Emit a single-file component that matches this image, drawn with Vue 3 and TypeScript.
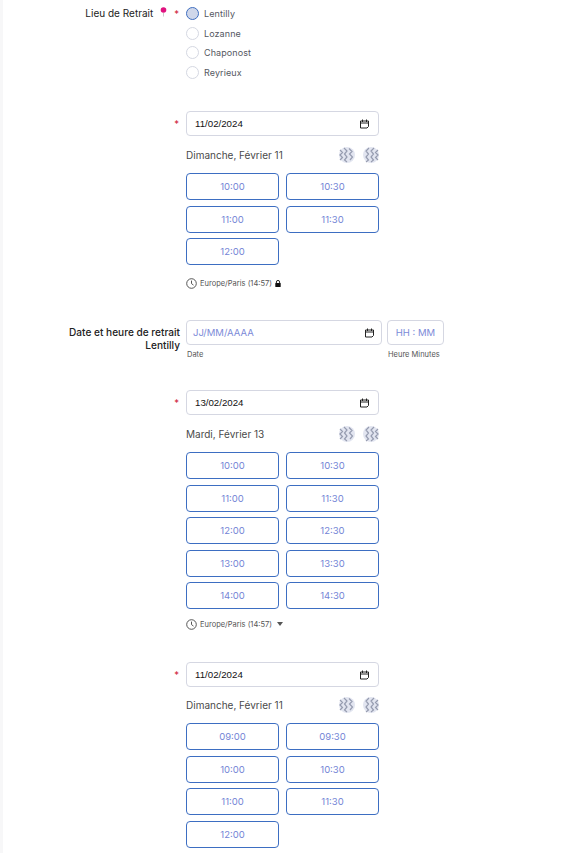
<script setup lang="ts">
interface Picker {
  date: string;
  day: string;
  slots: string[];
  zone?: "lock" | "open";
}
const sites = ["Lentilly", "Lozanne", "Chaponost", "Reyrieux"];
const first: Picker = { date: "11/02/2024", day: "Dimanche, Février 11", slots: ["10:00", "10:30", "11:00", "11:30", "12:00"], zone: "lock" };
const second: Picker = { date: "13/02/2024", day: "Mardi, Février 13", slots: ["10:00", "10:30", "11:00", "11:30", "12:00", "12:30", "13:00", "13:30", "14:00", "14:30"], zone: "open" };
const third: Picker = { date: "11/02/2024", day: "Dimanche, Février 11", slots: ["09:00", "09:30", "10:00", "10:30", "11:00", "11:30", "12:00"] };
const leftIcon = "M1 3l2.500 2.500L1 8l2.500 2.500L1 13M5 1l3 3-2.500 3L8 10l-2.500 3 2.500 2M10 1.500l3 3L10.500 7l3 3-2.500 3";
const rightIcon = "M6 1L3 4l2.500 3L3 10l2.500 3L3 15M11 1L8 4l2.500 3L8 10l2.500 3L8 15M15 3l-2.500 2.500L15 8l-2.500 2.500L15 13";
</script>

<template>
  <main class="page">
    <section class="row site-row">
      <div class="label">Lieu de Retrait<svg class="pin" width="7" height="10" viewBox="0 0 7 10"><circle cx="3.500" cy="3" r="2.800" fill="#e0127f" /><path d="M3.500 6v3.500" stroke="#bbb" stroke-width="0.8" /></svg><span class="star">*</span></div>
      <div class="radios">
        <label v-for="(s, i) in sites" :key="s" class="radio">
          <span class="dot" :class="{ on: i === 0 }"></span>{{ s }}
        </label>
      </div>
    </section>

    <section v-for="(p, idx) in [first, null, second, third]" :key="idx" class="row" :class="p ? 'picker-row' : 'manual-row'">
      <template v-if="p">
        <div class="label"><span class="star">*</span></div>
        <div class="picker">
          <div class="input">
            <span>{{ p.date }}</span>
            <svg width="9" height="10" viewBox="0 0 9 10" fill="none" stroke="#222" stroke-width="1"><path d="M.5 2h8v5.500L7 9H.5zM.5 4h8M2.500 .5v2.500M6.500 .5v2.500" /></svg>
          </div>
          <div class="day">
            <span>{{ p.day }}</span>
            <span class="navs">
              <svg v-for="n in 2" :key="n" width="16" height="16" viewBox="0 0 16 16">
                <circle cx="8" cy="8" r="8" fill="#e2e5f0" />
                <path :d="n === 1 ? leftIcon : rightIcon" fill="none" stroke="#969cb0" stroke-width="1.2" />
              </svg>
            </span>
          </div>
          <div class="slots">
            <button v-for="t in p.slots" :key="t" type="button" class="slot">{{ t }}</button>
          </div>
          <div v-if="p.zone" class="zone" :class="'zone-' + p.zone">
            <svg width="11" height="11" viewBox="0 0 11 11" fill="none" stroke="#444" stroke-width="0.9"><circle cx="5.500" cy="5.500" r="4.800" /><path d="M5.500 2.600v3l2 1.500" /></svg>
            <span>Europe/Paris (14:57)</span>
            <svg v-if="p.zone === 'lock'" width="6" height="7" viewBox="0 0 6 7"><rect x="0.3" y="3" width="5.400" height="4" rx="0.6" fill="#111" /><path d="M1.400 3V2a1.600 1.600 0 0 1 3.200 0v1" fill="none" stroke="#111" stroke-width="0.9" /></svg>
            <svg v-else class="caret" width="6" height="4" viewBox="0 0 6 4"><path d="M0 0h6L3 4z" fill="#555" /></svg>
          </div>
        </div>
      </template>
      <template v-else>
        <div class="label strong">Date et heure de retrait<br />Lentilly</div>
        <div class="manual">
          <div class="cell date-cell">
            <div class="input ph">
              <span>JJ/MM/AAAA</span>
              <svg width="9" height="10" viewBox="0 0 9 10" fill="none" stroke="#222" stroke-width="1"><path d="M.5 2h8v5.500L7 9H.5zM.5 4h8M2.500 .5v2.500M6.500 .5v2.500" /></svg>
            </div>
            <small>Date</small>
          </div>
          <div class="cell time-cell">
            <div class="input ph time"><span>HH : MM</span></div>
            <small>Heure Minutes</small>
          </div>
        </div>
      </template>
    </section>
  </main>
</template>

<style scoped>
.page {
  box-sizing: border-box;
  width: 577px;
  height: 853px;
  overflow: hidden;
  border-left: 3px solid #f7f7f8;
  font-family: Inter, "Liberation Sans", sans-serif;
  color: #333;
  background: #fff;
}
.row {
  display: grid;
  grid-template-columns: 177px 193px;
  column-gap: 6px;
}
.site-row { padding-top: 7px; }
.site-row + .picker-row { margin-top: 32px; }
.manual-row { margin-top: 31px; }
.manual-row + .picker-row { margin-top: 31px; }
.picker-row:last-child { margin-top: 32px; }
.picker-row:last-child .day { margin-top: 10px; }
.label {
  text-align: right;
  font-size: 10px;
  line-height: 13px;
  color: #222;
}
.strong { font-weight: 500; padding-top: 6px; font-size: 10.100px; }
.pin { margin: 0 7px 0 7px; }
.star { color: #d0243c; font-size: 9.5px; margin-right: 1px; }
.picker-row .label { padding-top: 6px; }
.radios { display: flex; flex-direction: column; gap: 6.7px; }
.radio {
  display: flex;
  align-items: center;
  gap: 5px;
  height: 13px;
  font-size: 9px;
  color: #55585f;
  letter-spacing: 0.1px;
}
.dot {
  box-sizing: border-box;
  width: 13px;
  height: 13px;
  border-radius: 50%;
  border: 1px solid #d5d8e2;
  background: #fff;
}
.dot.on { background: #cfd7ea; border-color: #3f6ec0; }
.input {
  box-sizing: border-box;
  display: flex;
  align-items: center;
  justify-content: space-between;
  height: 25px;
  padding: 0 9px 0 8px;
  border: 1px solid #d5d7e2;
  border-radius: 4px;
  font-family: "Liberation Sans", Arial, sans-serif;
  font-size: 9.7px;
  color: #111;
  background: #fff;
}
.day {
  display: flex;
  align-items: center;
  justify-content: space-between;
  height: 16px;
  margin: 11px 0 10px;
  font-size: 10px;
  color: #4a4a4a;
}
.navs { display: flex; gap: 8px; }
.slots {
  display: grid;
  grid-template-columns: 93px 93px;
  column-gap: 7px;
  row-gap: 5.5px;
}
.slot {
  box-sizing: border-box;
  height: 27px;
  padding: 0;
  border: 1px solid #3d6ec2;
  border-radius: 4px;
  background: #fff;
  color: #7485d6;
  font-family: inherit;
  font-size: 9.5px;
}
.zone {
  display: flex;
  align-items: center;
  gap: 3px;
  height: 12px;
  margin-top: 9px;
  font-size: 7.5px;
  color: #555;
}
.zone-lock { margin-top: 12px; }
.caret { margin-left: 2px; }
.manual { display: flex; gap: 5px; width: 258px; }
.date-cell { width: 196px; }
.time-cell { width: 57px; }
.ph {
  font-family: Inter, "Liberation Sans", sans-serif;
  color: #7c8ad8;
  padding: 0 7px 0 6px;
  font-size: 9.5px;
}
.time { justify-content: center; padding: 0; }
small {
  display: block;
  margin-top: 5px;
  padding-left: 1px;
  font-size: 7.5px;
  line-height: 9px;
  color: #555;
}
</style>
